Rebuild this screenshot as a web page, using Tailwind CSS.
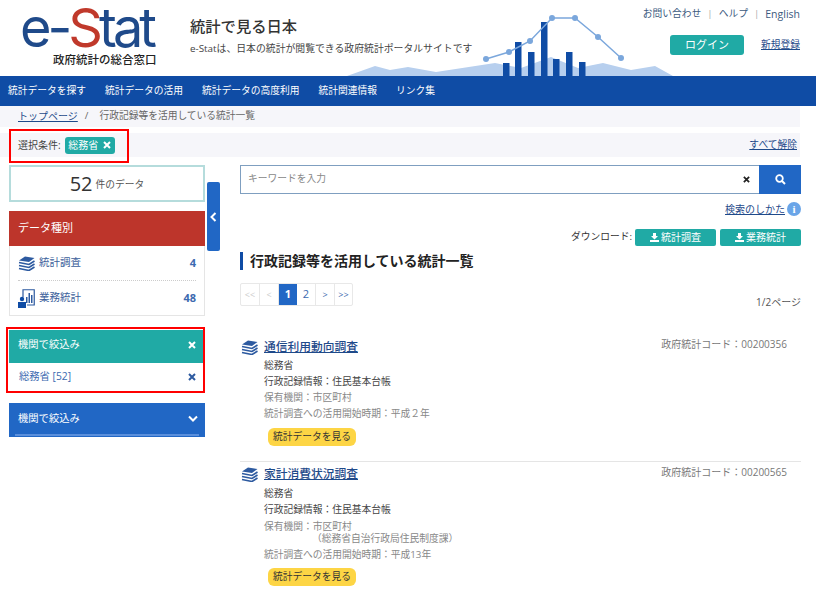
<!DOCTYPE html>
<html lang="ja">
<head>
  <meta charset="UTF-8" />
  <title>e-Stat 政府統計の総合窓口</title>
  <script src="https://cdn.jsdelivr.net/npm/@tailwindcss/browser@4"></script>
</head>
<body class="relative w-[816px] h-[597px] overflow-hidden bg-white text-[#333] text-[9.75px] font-['Open_Sans','Noto_Sans_CJK_JP',sans-serif]">

  <!-- header -->
  <header class="relative h-[76px] flex">
    <div class="w-[190px] pl-[20px] flex flex-col">
      <div class="mt-[3px] h-[49px] flex items-baseline text-[#1f4a8a] font-['Inter',sans-serif] font-normal text-[54px] leading-[49px] tracking-[-4px] whitespace-nowrap">
        <span>e-</span><span class="text-[#c0392b]">S</span><span>tat</span>
      </div>
      <div class="pl-[33px] text-[11.5px] leading-[16px] font-medium text-[#222] whitespace-nowrap">政府統計の総合窓口</div>
    </div>
    <div class="pt-[16px]">
      <h1 class="text-[15.3px] leading-[20px] font-medium text-[#333]">統計で見る日本</h1>
      <p class="mt-[4px] text-[9.85px] leading-[16px] text-[#444] whitespace-nowrap">e-Statは、日本の統計が閲覧できる政府統計ポータルサイトです</p>
    </div>
    <!-- chart decoration -->
    <svg class="absolute left-0 top-0" width="816" height="76" viewBox="0 0 816 76">
      <polygon fill="#b7cfee" points="347,76 375,66 390,70 408,67 436,72 495,63 521,68 551,57 578,68 603,63 631,70 655,66 673,76" />
      <g fill="#0f4ca5">
        <rect x="503" y="63" width="6.5" height="13" /><rect x="515" y="42" width="6.5" height="34" /><rect x="528" y="52" width="6.5" height="24" /><rect x="541" y="22" width="6.5" height="54" /><rect x="553" y="59" width="6.5" height="17" /><rect x="566" y="52" width="6.5" height="24" /><rect x="579" y="62" width="6.5" height="14" />
      </g>
      <polyline fill="none" stroke="#7ba7dc" stroke-width="1.5" points="486,59 509,52 530,41 552,18 575,18 598,37 621,58" />
      <g fill="#7ba7dc">
        <circle cx="486" cy="59" r="3" /><circle cx="509" cy="52" r="3" /><circle cx="530" cy="41" r="3" /><circle cx="552" cy="18" r="3" /><circle cx="575" cy="18" r="3" /><circle cx="598" cy="37" r="3" /><circle cx="621" cy="58" r="3" />
      </g>
    </svg>
    <div class="absolute right-[16px] top-[6px] flex flex-col items-end">
      <div class="flex gap-[6px] text-[9.75px] leading-[16px] text-[#3c5a80]">
        <span>お問い合わせ</span><span class="text-[#aaa]">|</span><span>ヘルプ</span><span class="text-[#aaa]">|</span><span class="text-[10.5px]">English</span>
      </div>
      <div class="mt-[13px] flex items-center gap-[17px]">
        <span class="w-[74px] h-[20px] rounded-[3px] bg-[#20aaa5] text-white text-[11px] flex items-center justify-center">ログイン</span>
        <a class="text-[9.75px] text-[#1f4a8a] underline">新規登録</a>
      </div>
    </div>
  </header>

  <!-- nav -->
  <nav class="h-[30px] bg-[#0f4ca5] flex items-center gap-[19px] pl-[8px] text-white text-[9.75px]">
    <span>統計データを探す</span><span>統計データの活用</span><span>統計データの高度利用</span><span>統計関連情報</span><span>リンク集</span>
  </nav>

  <!-- breadcrumb + conditions -->
  <div class="mr-[16px]">
    <div class="h-[21px] bg-[#f6f6fa] pl-[18px] flex items-center gap-[7px] text-[9.75px] text-[#666]">
      <a class="text-[10px] text-[#1f4a8a] underline">トップページ</a><span>/</span><span class="ml-[4px]">行政記録等を活用している統計一覧</span>
    </div>
    <div class="mt-[6px] h-[24px] bg-[#f6f6fa] pl-[18px] pr-[3px] flex items-center text-[10px]">
      <span class="text-[#444]">選択条件:</span>
      <span class="ml-[4px] h-[17px] w-[50px] rounded-[3px] bg-[#20aaa5] text-white flex items-center justify-center gap-[5px]">総務省
        <svg width="8" height="8" viewBox="0 0 8 8"><path d="M1 1l6 6M7 1L1 7" stroke="#fff" stroke-width="2" /></svg>
      </span>
      <a class="ml-auto text-[#1f4a8a] underline text-[9.75px]">すべて解除</a>
    </div>
  </div>

  <!-- main -->
  <main class="flex mt-[7px]">
    <!-- left column -->
    <aside class="ml-[9px] w-[196px] shrink-0 pt-[1px]">
      <div class="h-[37px] border-2 border-[#b5dcdc] flex items-center justify-center gap-[3px]">
        <span class="text-[20px] text-[#333]">52</span><span class="text-[9.75px] text-[#555] mt-[3px]">件のデータ</span>
      </div>
      <div class="mt-[9px]">
        <div class="h-[35px] bg-[#bd352b] text-white text-[11px] pl-[9px] flex items-center">データ種別</div>
        <div class="border border-t-0 border-[#e5e5e5]">
          <div class="mx-[8px] h-[35px] flex items-center border-b border-dotted border-[#ccc] text-[#3c5f9b]">
            <svg width="17" height="15" viewBox="0 0 17 15" class="mr-[4px]"><path d="M1 4.500L7 .5l9.500 1.500L11 6z" fill="#2d5aa0" /><path d="M1 6.500l10 2 5.500-3.500M1 9.500l10 2 5.500-3.500M1 12.500l10 2 5.500-3.500" fill="none" stroke="#2d5aa0" stroke-width="1.600" /></svg>
            <span class="text-[10.5px]">統計調査</span><span class="ml-auto font-bold text-[11px] text-[#3c6ab0]">4</span>
          </div>
          <div class="mx-[8px] h-[34px] flex items-center text-[#3c5f9b]">
            <svg width="17" height="19" viewBox="0 0 17 19" class="mr-[4px]"><path d="M5 8V.75h11.250V16H9" fill="none" stroke="#2d5aa0" stroke-width="1.200" /><path d="M8 8h1.500v6H8zM10.500 4h1.500v10h-1.500zM13 6h1.500v8H13z" fill="#2d5aa0" /><circle cx="4" cy="10" r="2.200" fill="#0f4ca5" /><path d="M0 13h8v6H0z" fill="#0f4ca5" /></svg>
            <span class="text-[10.5px]">業務統計</span><span class="ml-auto font-bold text-[11px] text-[#3c6ab0]">48</span>
          </div>
        </div>
      </div>
      <div class="mt-[14px]">
        <div class="h-[33px] pb-[3px] bg-[#20aaa5] text-white text-[10.3px] pl-[9px] pr-[9px] flex items-center justify-between">機関で絞込み
          <svg width="8" height="8" viewBox="0 0 8 8"><path d="M1 1l6 6M7 1L1 7" stroke="#fff" stroke-width="2" /></svg>
        </div>
        <div class="h-[28px] pl-[10px] pr-[9px] flex items-center justify-between text-[10.3px] text-[#3c6ab0]">
          <span>総務省 [52]</span>
          <svg width="8" height="8" viewBox="0 0 8 8"><path d="M1 1l6 6M7 1L1 7" stroke="#2d5aa0" stroke-width="2" /></svg>
        </div>
      </div>
      <div class="mt-[12px] h-[34px] bg-[#2167c5] text-white text-[10.3px] flex flex-col">
        <div class="h-[31px] pl-[9px] pr-[7px] flex items-center justify-between">機関で絞込み
          <svg width="10" height="7" viewBox="0 0 10 7"><path d="M1 1.500l4 4 4-4" fill="none" stroke="#fff" stroke-width="2" /></svg>
        </div>
        <div class="mx-[6px] h-[2px] bg-[#5a8fdc]"></div>
      </div>
    </aside>

    <!-- collapse tab -->
    <div class="ml-[2px] mt-[18px] w-[13px] h-[69px] rounded-[2px] bg-[#2167c5] shrink-0 flex items-center justify-center">
      <svg width="7" height="10" viewBox="0 0 7 10"><path d="M5.500 1l-4 4 4 4" fill="none" stroke="#fff" stroke-width="2" /></svg>
    </div>

    <!-- right column -->
    <section class="ml-[20px] w-[561px]">
      <div class="mt-[1px] h-[29px] border border-[#7f9fc0] flex items-center">
        <span class="pl-[7px] text-[9.75px] text-[#888]">キーワードを入力</span>
        <svg class="ml-auto mr-[9px]" width="7" height="7" viewBox="0 0 8 8"><path d="M1 1l6 6M7 1L1 7" stroke="#222" stroke-width="2" /></svg>
        <span class="w-[42px] h-[29px] -mr-[1px] bg-[#2167c5] flex items-center justify-center">
          <svg width="11" height="11" viewBox="0 0 11 11"><circle cx="4.500" cy="4.500" r="3.300" fill="none" stroke="#fff" stroke-width="1.800" /><path d="M7 7l3 3" stroke="#fff" stroke-width="2" /></svg>
        </span>
      </div>
      <div class="mt-[7px] h-[16px] flex items-center justify-end gap-[2px] text-[10px]">
        <a class="text-[#1f4a8a] underline">検索のしかた</a>
        <span class="w-[14px] h-[14px] rounded-full bg-[#6aa5e8] text-white font-bold text-[11px] leading-[14px] text-center font-['Liberation_Serif',serif]">i</span>
      </div>
      <div class="mt-[12px] flex items-center justify-end text-[9.75px]">
        <span class="mr-[3px] text-[#333]">ダウンロード:</span>
        <span class="w-[81px] h-[17px] rounded-[2px] bg-[#20aaa5] text-white text-[10px] flex items-center justify-center gap-[2px]">
          <svg width="9" height="9" viewBox="0 0 9 9"><path d="M3 0h3v3h2L4.500 6.500 1 3h2zM0 7h9v2H0z" fill="#fff" /></svg>統計調査</span>
        <span class="ml-[4px] w-[81px] h-[17px] rounded-[2px] bg-[#20aaa5] text-white text-[10px] flex items-center justify-center gap-[2px]">
          <svg width="9" height="9" viewBox="0 0 9 9"><path d="M3 0h3v3h2L4.500 6.500 1 3h2zM0 7h9v2H0z" fill="#fff" /></svg>業務統計</span>
      </div>
      <h2 class="mt-[6px] h-[18px] border-l-[3px] border-[#0f4ca5] pl-[7px] text-[14px] leading-[18px] font-bold text-[#222]">行政記録等を活用している統計一覧</h2>
      <div class="mt-[13px] flex items-end justify-between">
        <div class="flex h-[23px] w-[113px] border border-[#e8e8e8] rounded-[2px] text-[9px] text-[#3c6ab0]">
          <span class="w-[19px] flex items-center justify-center border-r border-[#e8e8e8] text-[#ccc]">&lt;&lt;</span>
          <span class="w-[19px] flex items-center justify-center border-r border-[#e8e8e8] text-[#ccc]">&lt;</span>
          <span class="w-[18px] flex items-center justify-center bg-[#2167c5] text-white font-bold text-[11px]">1</span>
          <span class="w-[19px] flex items-center justify-center border-r border-[#e8e8e8] text-[11px]">2</span>
          <span class="w-[19px] flex items-center justify-center border-r border-[#e8e8e8]">&gt;</span>
          <span class="flex-1 flex items-center justify-center">&gt;&gt;</span>
        </div>
        <span class="-mb-[4px] text-[10px] text-[#555]">1/2ページ</span>
      </div>

      <!-- results -->
      <article class="mt-[32px] h-[124px] border-b border-[#e5e5e5]">
        <div class="flex items-center h-[18px]">
          <svg width="17" height="15" viewBox="0 0 17 15" class="mr-[6px] ml-[1px]"><path d="M1 4.500L7 .5l9.500 1.500L11 6z" fill="#2d5aa0" /><path d="M1 6.500l10 2 5.500-3.500M1 9.500l10 2 5.500-3.500M1 12.500l10 2 5.500-3.500" fill="none" stroke="#2d5aa0" stroke-width="1.600" /></svg>
          <a class="text-[11.75px] font-medium text-[#1f4a8a] underline">通信利用動向調査</a>
          <span class="ml-auto mr-[14px] -mt-[5px] text-[10px] text-[#777]">政府統計コード：00200356</span>
        </div>
        <div class="ml-[24px] mt-[2px] text-[9.75px] leading-[16px]">
          <p class="text-[#444]">総務省</p>
          <p class="text-[#444]">行政記録情報：住民基本台帳</p>
          <p class="text-[#888]">保有機関：市区町村</p>
          <p class="text-[#888]">統計調査への活用開始時期：平成２年</p>
          <span class="ml-[4px] mt-[6px] flex items-center justify-center w-[88px] h-[18px] rounded-[6px] bg-[#fdd545] text-[#333]">統計データを見る</span>
        </div>
      </article>
      <article class="mt-[3px]">
        <div class="flex items-center h-[18px]">
          <svg width="17" height="15" viewBox="0 0 17 15" class="mr-[6px] ml-[1px]"><path d="M1 4.500L7 .5l9.500 1.500L11 6z" fill="#2d5aa0" /><path d="M1 6.500l10 2 5.500-3.500M1 9.500l10 2 5.500-3.500M1 12.500l10 2 5.500-3.500" fill="none" stroke="#2d5aa0" stroke-width="1.600" /></svg>
          <a class="text-[11.75px] font-medium text-[#1f4a8a] underline">家計消費状況調査</a>
          <span class="ml-auto mr-[14px] -mt-[3px] text-[10px] text-[#777]">政府統計コード：00200565</span>
        </div>
        <div class="ml-[24px] mt-[3px] text-[9.75px] leading-[16px]">
          <p class="text-[#444]">総務省</p>
          <p class="text-[#444]">行政記録情報：住民基本台帳</p>
          <p class="text-[#888] leading-[12px] mt-[3px]">保有機関：市区町村<br /><span class="pl-[48px]">（総務省自治行政局住民制度課）</span></p>
          <p class="text-[#888] mt-[2px]">統計調査への活用開始時期：平成13年</p>
          <span class="ml-[4px] mt-[5px] flex items-center justify-center w-[88px] h-[18px] rounded-[6px] bg-[#fdd545] text-[#333]">統計データを見る</span>
        </div>
      </article>
    </section>
  </main>

  <!-- red annotation frames -->
  <div class="absolute left-[9px] top-[129px] w-[120px] h-[34px] border-2 border-[#f00] border-solid"></div>
  <div class="absolute left-[6px] top-[327px] w-[199px] h-[66px] border-2 border-[#f00] border-solid"></div>
</body>
</html>
